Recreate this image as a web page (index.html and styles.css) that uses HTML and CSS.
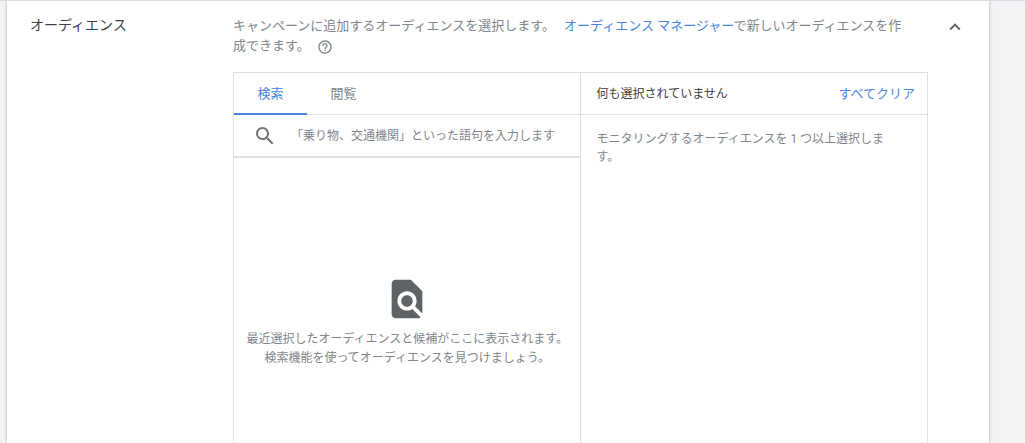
FILE: index.html
```
<!DOCTYPE html>
<html lang="ja">
<head>
    <meta charset="UTF-8">
    <meta name="viewport" content="width=device-width, initial-scale=1.0">
    <title>オーディエンス</title>
    <link rel="stylesheet" href="styles.css">
</head>
<body>
    <section class="card">
        <h2 class="title">オーディエンス</h2>
        <div class="content">
            <p class="description">
                キャンペーンに追加するオーディエンスを選択します。
                <a href="#">オーディエンス マネージャー</a>で新しいオーディエンスを作成できます。
                <button class="help" type="button" aria-label="ヘルプ">
                    <svg viewBox="0 0 24 24"><path d="M11 18h2v-2h-2v2zm1-16C6.48 2 2 6.48 2 12s4.480 10 10 10 10-4.480 10-10S17.520 2 12 2zm0 18c-4.410 0-8-3.590-8-8s3.590-8 8-8 8 3.590 8 8-3.590 8-8 8zm0-14c-2.210 0-4 1.790-4 4h2c0-1.100.9-2 2-2s2 .9 2 2c0 2-3 1.750-3 5h2c0-2.250 3-2.500 3-5 0-2.210-1.790-4-4-4z"/></svg>
                </button>
            </p>
            <div class="picker">
                <div class="pane">
                    <div class="pane-header tabs" role="tablist">
                        <button class="tab active" type="button" role="tab" aria-selected="true">検索</button>
                        <button class="tab" type="button" role="tab" aria-selected="false">閲覧</button>
                    </div>
                    <label class="search">
                        <svg viewBox="0 0 24 24"><path d="M15.500 14h-.79l-.28-.27C15.410 12.590 16 11.110 16 9.500 16 5.910 13.090 3 9.500 3S3 5.910 3 9.500 5.910 16 9.500 16c1.610 0 3.090-.59 4.230-1.570l.27.28v.79l5 4.990L20.490 19l-4.990-5zm-6 0C7.010 14 5 11.990 5 9.500S7.010 5 9.500 5 14 7.010 14 9.500 11.990 14 9.500 14z"/></svg>
                        <input type="text" aria-label="オーディエンスを検索" placeholder="「乗り物、交通機関」といった語句を入力します">
                    </label>
                    <div class="empty">
                        <svg viewBox="0 0 24 24"><path d="M20 19.590V8l-6-6H6c-1.100 0-1.990.9-1.990 2L4 20c0 1.100.89 2 1.990 2H18c.45 0 .85-.15 1.190-.4l-4.430-4.430c-.8.520-1.740.83-2.760.83-2.760 0-5-2.240-5-5s2.240-5 5-5 5 2.240 5 5c0 1.020-.31 1.960-.83 2.750L20 19.590zM9 13c0 1.660 1.340 3 3 3s3-1.340 3-3-1.340-3-3-3-3 1.340-3 3z"/></svg>
                        <p>最近選択したオーディエンスと候補がここに表示されます。<br>検索機能を使ってオーディエンスを見つけましょう。</p>
                    </div>
                </div>
                <div class="pane">
                    <div class="pane-header selected-header">
                        <span>何も選択されていません</span>
                        <button class="clear" type="button">すべてクリア</button>
                    </div>
                    <p class="selected-note">モニタリングするオーディエンスを 1 つ以上選択します。</p>
                </div>
            </div>
        </div>
        <button class="collapse" type="button" aria-label="閉じる">
            <svg viewBox="0 0 24 24"><path d="M12 8l-6 6 1.410 1.410L12 10.830l4.590 4.580L18 14z"/></svg>
        </button>
    </section>
</body>
</html>
```
FILE: styles.css
```
* {
    box-sizing: border-box;
}
body {
    display: flex;
    min-height: 100vh;
    margin: 0;
    padding: 0 36px 0 7px;
    background-color: #f1f3f4;
    border-top: 1px solid #dadce0;
    color: #80868b;
    font-family: Roboto, "Noto Sans CJK JP", sans-serif;
    font-size: 13px;
    line-height: 20px;
}
h2, p {
    margin: 0;
}
svg {
    display: block;
    fill: currentColor;
}
button {
    padding: 0;
    border: 0;
    background: none;
    color: inherit;
    font: inherit;
    cursor: pointer;
}
a, .clear {
    color: #4a86e0;
    text-decoration: none;
}
.card {
    flex: 1;
    display: grid;
    grid-template-columns: 203px 1fr 61px;
    padding-left: 23px;
    background-color: #fff;
    box-shadow: 0 0 3px rgba(60, 64, 67, 0.4);
}
.title {
    padding-top: 14px;
    color: #3c4043;
    font-size: 14px;
    font-weight: 400;
    line-height: 20px;
}
.content {
    display: flex;
    flex-direction: column;
    padding-top: 15px;
}
.description {
    padding-right: 18px;
}
.description a {
    margin-left: 6px;
}
.help {
    margin-left: 4px;
    vertical-align: middle;
}
.help svg {
    width: 16px;
    height: 16px;
}

/* オーディエンスの選択 */
.picker {
    flex: 1;
    display: grid;
    grid-template-columns: 1fr 1fr;
    margin-top: 16px;
    border: 1px solid #e0e0e0;
    border-bottom: 0;
}
.pane + .pane {
    margin-left: -1px;
    border-left: 1px solid #e0e0e0;
}
.pane-header {
    display: flex;
    height: 42px;
    border-bottom: 1px solid #e0e0e0;
}
.tab {
    width: 73px;
    padding-top: 2px;
    border-bottom: 2px solid transparent;
}
.tab.active {
    margin-bottom: -1px;
    border-color: #4a86e0;
    color: #4a86e0;
}
.search {
    display: flex;
    align-items: center;
    height: 43px;
    padding-left: 19px;
    border-bottom: 2px solid #e0e0e0;
}
.search svg {
    width: 24px;
    height: 24px;
    color: #757575;
}
.search input {
    flex: 1;
    min-width: 0;
    margin-left: 14px;
    padding: 0;
    border: 0;
    outline: 0;
    color: #3c4043;
    font: inherit;
    font-size: 12px;
}
.search input::placeholder {
    color: #80868b;
}
.empty {
    padding-top: 118px;
    font-size: 12px;
    line-height: 19px;
    text-align: center;
}
.empty svg {
    width: 46px;
    height: 46px;
    margin: 0 auto 8px;
    color: #5f6368;
}
.selected-header {
    align-items: center;
    justify-content: space-between;
    padding: 0 12px 0 16px;
    color: #3c4043;
    font-size: 12px;
}
.clear {
    font-size: 13px;
}
.selected-note {
    padding: 15px 32px 0 16px;
    font-size: 12px;
    line-height: 18px;
}
.collapse {
    align-self: start;
    justify-self: center;
    margin: 15px 8px 0 0;
    color: #5f6368;
}
.collapse svg {
    width: 22px;
    height: 22px;
}
```
